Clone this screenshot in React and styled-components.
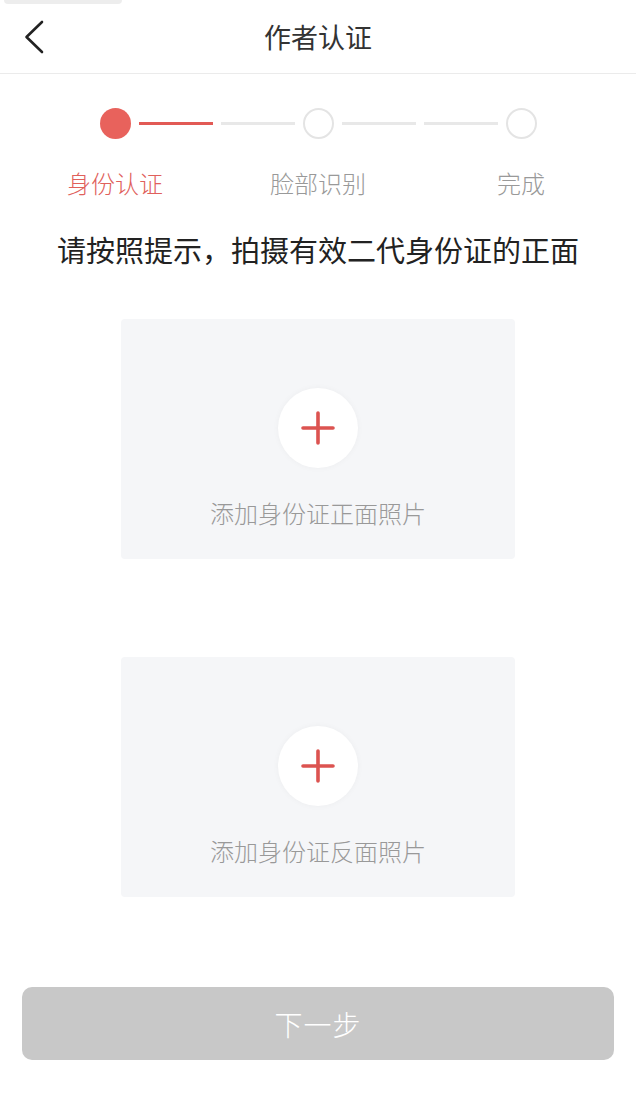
import React from "react";
import styled, { createGlobalStyle } from "styled-components";

const GlobalStyle = createGlobalStyle`
  html, body { margin: 0; padding: 0; background: #ffffff; }
  body { font-family: "Noto Sans CJK SC", "Noto Sans", sans-serif; }
  * { box-sizing: border-box; }
`;

const Page = styled.div`
  width: 636px;
  min-height: 1108px;
  background: #ffffff;
  display: flex;
  flex-direction: column;
  align-items: center;
`;

const Header = styled.header`
  position: relative;
  width: 100%;
  height: 74px;
  border-bottom: 1px solid #ebebeb;
  display: grid;
  grid-template-columns: 80px 1fr 80px;
  align-items: center;
`;

const TopPill = styled.div`
  position: absolute;
  left: 4px;
  top: 0;
  width: 118px;
  height: 4px;
  background: #ededed;
  border-radius: 0 0 40px 40px;
`;

const BackButton = styled.button`
  border: 0;
  background: none;
  padding: 0 0 0 24px;
  height: 100%;
  display: flex;
  align-items: center;
  cursor: pointer;
`;

const Title = styled.h1`
  margin: 0;
  text-align: center;
  font-size: 27px;
  font-weight: 400;
  color: #333333;
  line-height: 36px;
`;

const Track = styled.div`
  margin-top: 34px;
  display: flex;
  align-items: center;
  gap: 8px;
`;

const Dot = styled.span`
  width: 31px;
  height: 31px;
  border-radius: 50%;
  background: ${(p) => (p.$active ? "#e8625c" : "#ffffff")};
  border: ${(p) => (p.$active ? "none" : "2px solid #e4e4e4")};
  flex: none;
`;

const Line = styled.span`
  width: 74px;
  height: 3px;
  background: ${(p) => (p.$active ? "#e25a55" : "#e8e8e8")};
  flex: none;
`;

const Labels = styled.div`
  margin-top: 28px;
  display: flex;
`;

const Label = styled.span`
  width: 203px;
  text-align: center;
  font-size: 24px;
  font-weight: 300;
  line-height: 32px;
  color: ${(p) => (p.$active ? "#e0605b" : "#999999")};
`;

const Instruction = styled.p`
  margin: 32px 0 0;
  font-size: 29px;
  line-height: 36px;
  color: #222222;
  text-align: center;
`;

const UploadCard = styled.div`
  margin-top: ${(p) => p.$gap}px;
  width: 394px;
  height: 240px;
  background: #f5f6f8;
  border-radius: 4px;
  display: flex;
  flex-direction: column;
  align-items: center;
  padding-top: 69px;
  cursor: pointer;
`;

const PlusCircle = styled.div`
  width: 80px;
  height: 80px;
  border-radius: 50%;
  background: #ffffff;
  box-shadow: 0 0 6px rgba(0, 0, 0, 0.04);
  display: flex;
  align-items: center;
  justify-content: center;
`;

const CardText = styled.span`
  margin-top: 29px;
  font-size: 24px;
  font-weight: 300;
  line-height: 32px;
  color: #999999;
`;

const NextButton = styled.button`
  margin-top: 90px;
  width: 592px;
  height: 73px;
  border: 0;
  border-radius: 10px;
  background: #c8c8c8;
  color: #ffffff;
  font-family: "Noto Sans CJK SC", "Noto Sans", sans-serif;
  font-size: 28px;
  font-weight: 300;
  letter-spacing: 1px;
`;

const Chevron = () => (
  <svg width="20" height="34" viewBox="0 0 20 34" fill="none">
    <path d="M18 2 L2.5 17 L18 32" stroke="#222" strokeWidth="2.6" strokeLinecap="round" strokeLinejoin="round" />
  </svg>
);

const Plus = () => (
  <svg width="34" height="34" viewBox="0 0 34 34" fill="none">
    <path d="M17 2 V32 M2 17 H32" stroke="#dc5350" strokeWidth="3.6" strokeLinecap="round" />
  </svg>
);

export default function App() {
  return (
    <>
      <GlobalStyle />
      <Page>
        <Header>
          <TopPill />
          <BackButton aria-label="返回">
            <Chevron />
          </BackButton>
          <Title>作者认证</Title>
          <span />
        </Header>

        <Track>
          <Dot $active />
          <Line $active />
          <Line />
          <Dot />
          <Line />
          <Line />
          <Dot />
        </Track>
        <Labels>
          <Label $active>身份认证</Label>
          <Label>脸部识别</Label>
          <Label>完成</Label>
        </Labels>

        <Instruction>请按照提示，拍摄有效二代身份证的正面</Instruction>

        <UploadCard $gap={52}>
          <PlusCircle>
            <Plus />
          </PlusCircle>
          <CardText>添加身份证正面照片</CardText>
        </UploadCard>

        <UploadCard $gap={98}>
          <PlusCircle>
            <Plus />
          </PlusCircle>
          <CardText>添加身份证反面照片</CardText>
        </UploadCard>

        <NextButton>下一步</NextButton>
      </Page>
    </>
  );
}
